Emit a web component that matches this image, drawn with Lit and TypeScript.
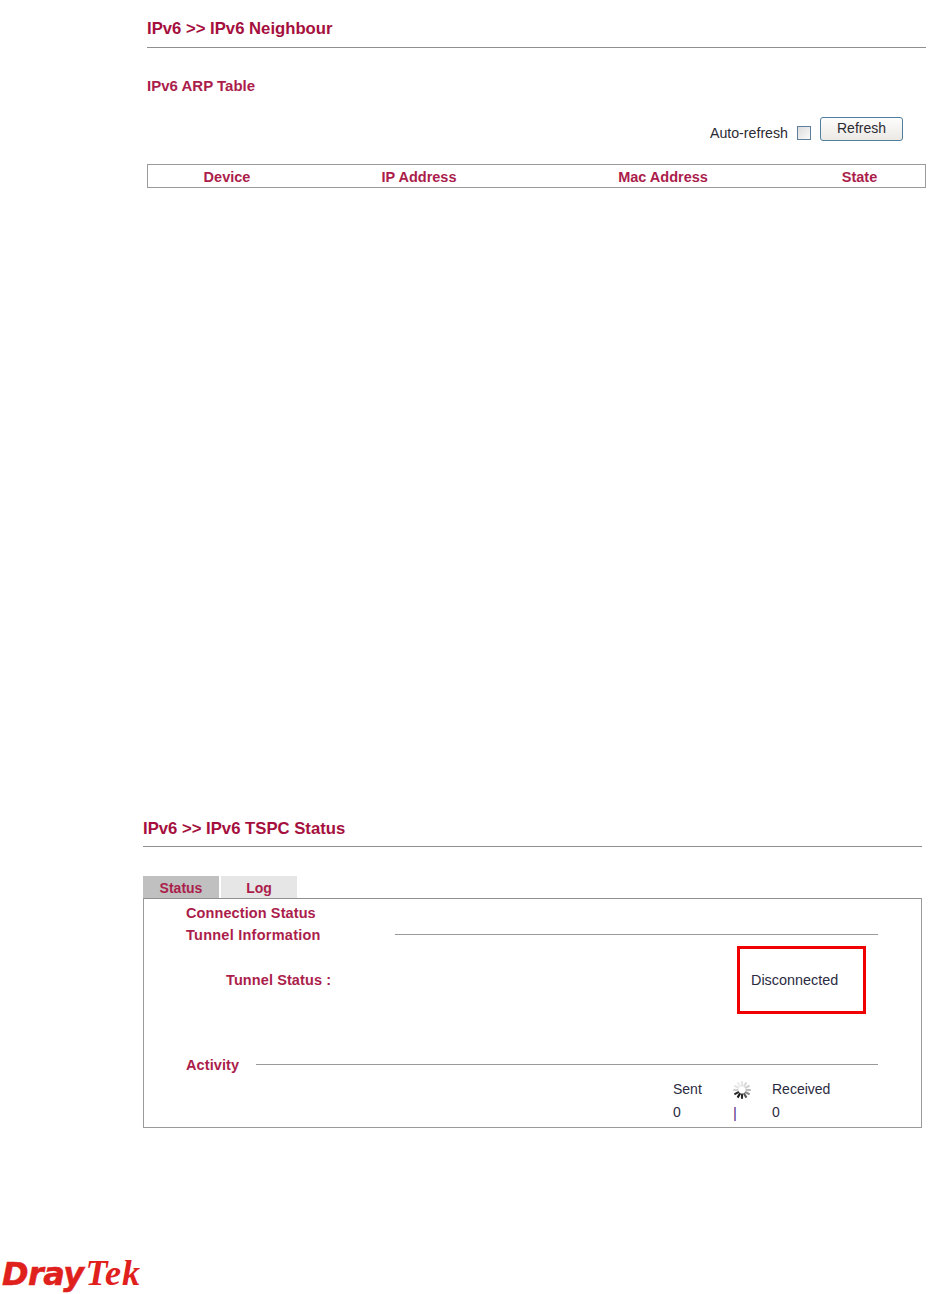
import { LitElement, html, css, svg } from "lit";
import { customElement } from "lit/decorators.js";

const spokes = Array.from({ length: 12 }, (_, i) => {
  const a = (i * 30 * Math.PI) / 180;
  const c = [ "#e4e4e4","#dcdcdc","#cfcfcf","#bdbdbd","#8a8a8a","#5a5a5a","#2a2a2a","#1a1a1a","#2a2a2a","#d0d0d0","#e4e4e4","#ececec" ][i];
  const x1 = 9 + Math.sin(a) * 3.6, y1 = 9 - Math.cos(a) * 3.6;
  const x2 = 9 + Math.sin(a) * 8.8, y2 = 9 - Math.cos(a) * 8.8;
  return svg`<line x1=${x1} y1=${y1} x2=${x2} y2=${y2} stroke=${c} stroke-width="2.1"></line>`;
});

@customElement("app-root")
export class AppRoot extends LitElement {
  static styles = css`
    :host { display: block; width: 945px; height: 1294px; overflow: hidden; background: #fff; font-family: "Liberation Sans", Arial, sans-serif; color: #a3123f; }
    .first { margin-left: 147px; width: 779px; padding-top: 19px; }
    .second { margin-left: 143px; width: 779px; margin-top: 631px; }
    h1 { margin: 0; font-size: 16.7px; line-height: 20px; font-weight: 700; color: #a50f3e; height: 28px; border-bottom: 1px solid #8f8f8f; }
    .second h1 { height: 27px; }
    h2 { margin: 28px 0 0; font-size: 15px; line-height: 20px; font-weight: 700; color: #ab1d4b; }
    .tools { display: flex; justify-content: flex-end; align-items: flex-start; margin-top: 21px; padding-right: 23px; color: #2b2b33; font-size: 14.2px; height: 47px; }
    .tools span { margin-top: 8px; line-height: 17px; }
    .check { width: 12px; height: 12px; border: 1px solid #5f7f9e; background: linear-gradient(135deg, #dcdcdc, #fbfbfb); margin: 9px 9px 0 9px; }
    .btn { width: 83px; height: 24px; box-sizing: border-box; border: 1px solid #4f7f9f; border-radius: 3px; background: linear-gradient(#fdfdfd, #ece9e4); text-align: center; font-size: 14px; line-height: 21px; color: #2b2b33; }
    .table { display: grid; grid-template-columns: 158px 226px 262px 1fr; height: 24px; box-sizing: border-box; border: 1px solid #9a9a9a; font-size: 14.5px; font-weight: 700; line-height: 24px; text-align: center; color: #ab1d4b; }
    .tabs { display: flex; gap: 2px; margin-top: 29px; height: 22px; }
    .tab { width: 76px; text-align: center; font-size: 14px; font-weight: 700; line-height: 24px; color: #ab1d4b; background: #e6e6e6; }
    .tab.on { background: #c0c0c0; }
    .panel { box-sizing: border-box; height: 230px; border: 1px solid #9a9a9a; border-top-color: #8f8f8f; padding: 4px 43px 0 42px; font-size: 14.5px; }
    .lbl { font-weight: 700; line-height: 20px; color: #ab1d4b; letter-spacing: 0.1px; }
    .legend { display: flex; align-items: center; margin-top: 2px; }
    .legend i { display: block; height: 1px; background: #9a9a9a; }
    .wide { width: 209px; letter-spacing: 0.25px; }
    .short { width: 70px; }
    .line-a { width: 483px; margin-bottom: 2px; }
    .line-b { width: 622px; }
    .status { display: flex; align-items: flex-start; margin-top: 1px; }
    .status .lbl { margin: 24px 0 0 40px; width: 511px; }
    .box { box-sizing: border-box; width: 129px; height: 68px; border: 3px solid #f00000; padding: 21px 0 0 11px; font-size: 14.4px; line-height: 20px; color: #2b2b3f; }
    .activity { margin-top: 40px; }
    .activity .lbl { position: relative; top: 1px; }
    .stats { display: grid; grid-template-columns: 60px 39px auto; justify-content: start; margin: 4px 0 0 487px; font-size: 14px; color: #2b2b3f; line-height: 23px; }
    .spin { width: 18px; height: 18px; display: block; margin-top: 3px; }
    .bar { color: #5d2a8a; font-size: 15px; }
    .logo { display: flex; align-items: baseline; margin: 125px 0 0 2px; height: 40px; line-height: 40px; color: #e0201c; font-style: italic; white-space: nowrap; }
    .dray { font-family: "DejaVu Sans", Arial, sans-serif; font-weight: 700; font-size: 32px; letter-spacing: -0.6px; -webkit-text-stroke: 0.5px #e0201c; }
    .tek { font-family: "Liberation Serif", "Times New Roman", serif; font-weight: 700; font-size: 36px; letter-spacing: 1px; margin-left: 2px; }
  `;

  render() {
    return html`
      <section class="first">
        <h1>IPv6 &gt;&gt; IPv6 Neighbour</h1>
        <h2>IPv6 ARP Table</h2>
        <div class="tools">
          <span>Auto-refresh</span>
          <div class="check"></div>
          <div class="btn">Refresh</div>
        </div>
        <div class="table">
          <div>Device</div><div>IP Address</div><div>Mac Address</div><div>State</div>
        </div>
      </section>
      <section class="second">
        <h1>IPv6 &gt;&gt; IPv6 TSPC Status</h1>
        <div class="tabs">
          <div class="tab on">Status</div>
          <div class="tab">Log</div>
        </div>
        <div class="panel">
          <div class="lbl">Connection Status</div>
          <div class="legend">
            <div class="lbl wide">Tunnel Information</div>
            <i class="line-a"></i>
          </div>
          <div class="status">
            <div class="lbl">Tunnel Status :</div>
            <div class="box">Disconnected</div>
          </div>
          <div class="legend activity">
            <div class="lbl short">Activity</div>
            <i class="line-b"></i>
          </div>
          <div class="stats">
            <div>Sent</div>
            <svg class="spin" viewBox="0 0 18 18">${spokes}</svg>
            <div>Received</div>
            <div>0</div>
            <div class="bar">|</div>
            <div>0</div>
          </div>
        </div>
      </section>
      <div class="logo"><span class="dray">Dray</span><span class="tek">Tek</span></div>
    `;
  }
}
